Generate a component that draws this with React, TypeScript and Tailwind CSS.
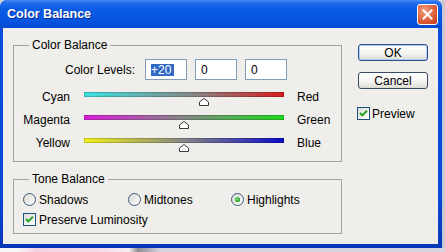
import React from "react";

function Thumb({ value }: { value: number }) {
  return (
    <div className="mt-[1px] w-[10px] h-[8px]" style={{ marginLeft: 100 + value - 5 }}>
      <svg width="10" height="8" viewBox="0 0 10 8">
        <path d="M0.5 7.5 L0.5 4 L5 0.5 L9.5 4 L9.5 7.5 Z" fill="#ffffff" stroke="#3a3a3a" strokeWidth="1" />
      </svg>
    </div>
  );
}

function SliderRow({
  left,
  right,
  gradient,
  value,
}: {
  left: string;
  right: string;
  gradient: string;
  value: number;
}) {
  return (
    <div className="flex items-start h-[23px]">
      <div className="w-[56px] text-right leading-[14px]">{left}</div>
      <div className="w-[200px] ml-[14px] flex flex-col">
        <div className={`h-[5px] mt-[2px] shadow-[inset_0_0_0_1px_rgba(0,0,0,0.18)] ${gradient}`} />
        <Thumb value={value} />
      </div>
      <div className="ml-[13px] leading-[14px]">{right}</div>
    </div>
  );
}

function CheckBox() {
  return (
    <svg width="13" height="13" viewBox="0 0 13 13" className="shrink-0">
      <defs>
        <linearGradient id="cbg" x1="0" y1="0" x2="1" y2="1">
          <stop offset="0" stopColor="#dcdcd6" />
          <stop offset="1" stopColor="#ffffff" />
        </linearGradient>
      </defs>
      <rect x="0.5" y="0.5" width="12" height="12" fill="url(#cbg)" stroke="#1c5180" />
      <path d="M3 6 L5.3 8.4 L10 3.8" fill="none" stroke="#21a121" strokeWidth="2" />
    </svg>
  );
}

function Radio({ checked }: { checked?: boolean }) {
  return (
    <svg width="13" height="13" viewBox="0 0 13 13" className="shrink-0">
      <defs>
        <linearGradient id="rbg" x1="0" y1="0" x2="1" y2="1">
          <stop offset="0" stopColor="#d8d8d2" />
          <stop offset="1" stopColor="#ffffff" />
        </linearGradient>
        <radialGradient id="rdot" cx="0.4" cy="0.4" r="0.6">
          <stop offset="0" stopColor="#7ee07e" />
          <stop offset="1" stopColor="#21a121" />
        </radialGradient>
      </defs>
      <circle cx="6.5" cy="6.5" r="6" fill="url(#rbg)" stroke="#3c5a7c" />
      {checked && <circle cx="6.5" cy="6.5" r="2.6" fill="url(#rdot)" />}
    </svg>
  );
}

function NumBox({ children }: { children: React.ReactNode }) {
  return (
    <div className="w-[42px] h-[21px] border border-[#7f9db9] bg-white flex items-center pl-[5px] leading-[14px]">
      {children}
    </div>
  );
}

function XPButton({ label, def }: { label: string; def?: boolean }) {
  return (
    <div
      className={`w-[70px] h-[17px] rounded-[3px] border flex items-center justify-center leading-[14px] bg-[linear-gradient(to_bottom,#ffffff,#f3f3ef_60%,#dcdad2)] ${
        def
          ? "border-[#2e4f8c] shadow-[inset_0_0_0_1px_#b0ccf2]"
          : "border-[#3b4a63]"
      }`}
    >
      {label}
    </div>
  );
}

export default function App() {
  return (
    <div className="w-[445px] h-[252px] flex flex-col bg-[#d3d2dc] font-['Liberation_Sans',Arial,sans-serif] text-[12px] text-black">
      <div className="flex">
        <div className="w-[442px] h-[248px] flex flex-col rounded-t-[7px] overflow-hidden bg-[linear-gradient(to_bottom,#0b4ee0,#0847d6_80%,#0836b8)]">
          <div className="h-[28px] shrink-0 flex items-center justify-between pl-[7px] pr-[4px] bg-[linear-gradient(to_bottom,#4a8ef5_0%,#2470ee_8%,#0c5ce6_30%,#0656e2_70%,#0449d2_100%)]">
            <span className="font-bold text-[12.5px] text-white leading-[16px] [text-shadow:1px_1px_0_#0c2d90]">
              Color Balance
            </span>
            <div className="w-[21px] h-[21px] rounded-[3px] border border-white flex items-center justify-center bg-[radial-gradient(circle_at_35%_30%,#f0a080,#e0603a_55%,#c23a18)]">
              <svg width="11" height="11" viewBox="0 0 11 11">
                <path d="M1.5 1.5 L9.5 9.5 M9.5 1.5 L1.5 9.5" stroke="#ffffff" strokeWidth="2" strokeLinecap="square" />
              </svg>
            </div>
          </div>
          <div className="flex-1 ml-[3px] mr-[4px] mb-[4px] bg-[#efeeea] flex">
            <div className="pl-[10px] pt-[10px] flex flex-col">
              <fieldset className="w-[329px] h-[124px] border border-[#a3a3a3] p-0 m-0">
                <legend className="ml-[15px] px-[3px] leading-[14px]">Color Balance</legend>
                <div className="flex items-center mt-[7px] h-[21px]">
                  <div className="w-[121px] text-right leading-[14px]">Color Levels:</div>
                  <div className="ml-[10px] flex gap-[8px]">
                    <NumBox>
                      <span className="bg-[#316ac5] text-white leading-[12px] pr-[3px]">+20</span>
                    </NumBox>
                    <NumBox>0</NumBox>
                    <NumBox>0</NumBox>
                  </div>
                </div>
                <div className="mt-[10px] flex flex-col">
                  <SliderRow
                    left="Cyan"
                    right="Red"
                    value={20}
                    gradient="bg-[linear-gradient(to_right,#3de0e0,#858585_55%,#d81c1c)]"
                  />
                  <SliderRow
                    left="Magenta"
                    right="Green"
                    value={0}
                    gradient="bg-[linear-gradient(to_right,#d81ed8,#858585_50%,#1ed81e)]"
                  />
                  <SliderRow
                    left="Yellow"
                    right="Blue"
                    value={0}
                    gradient="bg-[linear-gradient(to_right,#f0f018,#858585_50%,#0c0cc8)]"
                  />
                </div>
              </fieldset>
              <fieldset className="mt-[10px] w-[329px] h-[62px] border border-[#a3a3a3] p-0 m-0">
                <legend className="ml-[15px] px-[3px] leading-[14px]">Tone Balance</legend>
                <div className="mt-[7px] ml-[9px] flex items-center h-[13px]">
                  <div className="w-[105px] flex items-center gap-[3px]">
                    <Radio />
                    <span className="leading-[14px]">Shadows</span>
                  </div>
                  <div className="w-[103px] flex items-center gap-[3px]">
                    <Radio />
                    <span className="leading-[14px]">Midtones</span>
                  </div>
                  <div className="flex items-center gap-[3px]">
                    <Radio checked />
                    <span className="leading-[14px]">Highlights</span>
                  </div>
                </div>
                <div className="mt-[7px] ml-[9px] flex items-center gap-[3px] h-[13px]">
                  <CheckBox />
                  <span className="leading-[14px]">Preserve Luminosity</span>
                </div>
              </fieldset>
            </div>
            <div className="ml-[16px] pt-[16px] flex flex-col">
              <XPButton label="OK" def />
              <div className="mt-[11px]">
                <XPButton label="Cancel" />
              </div>
              <div className="mt-[18px] -ml-[1px] flex items-center gap-[2px] h-[13px]">
                <CheckBox />
                <span className="leading-[14px]">Preview</span>
              </div>
            </div>
          </div>
        </div>
        <div className="flex-1 bg-[#c9c8d2]" />
      </div>
      <div className="flex-1 bg-[linear-gradient(to_right,#f8f5f7_0%,#f8f5f7_4%,#f3d3e3_8%,#f4dbe8_22%,#f4eef2_29%,#8e8e92_31%,#a9a9b2_33%,#d6d5df_36%,#d6d5df_100%)]" />
    </div>
  );
}
